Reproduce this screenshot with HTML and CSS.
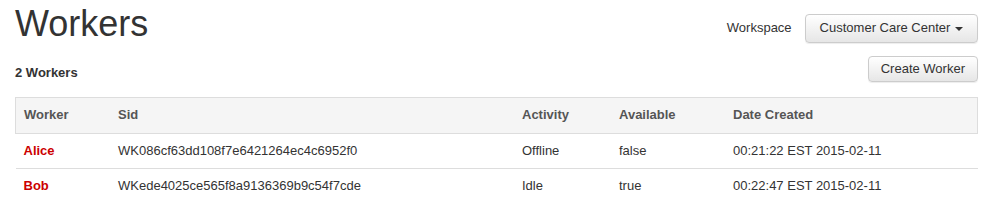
FILE: index.html
```html
<!DOCTYPE html>
<html lang="en">
<head>
    <meta charset="UTF-8">
    <title>Workers</title>
    <link rel="stylesheet" href="styles.css">
</head>
<body>
    <div class="container">
        <div class="page-header">
            <h1>Workers</h1>
            <div class="workspace">
                <span class="workspace-label">Workspace</span>
                <button class="btn btn-lg">Customer Care Center <span class="caret"></span></button>
            </div>
        </div>

        <div class="toolbar">
            <strong class="count">2 Workers</strong>
            <button class="btn">Create Worker</button>
        </div>

        <table class="workers">
            <thead>
                <tr>
                    <th class="col-name">Worker</th>
                    <th class="col-sid">Sid</th>
                    <th class="col-activity">Activity</th>
                    <th class="col-available">Available</th>
                    <th>Date Created</th>
                </tr>
            </thead>
            <tbody>
                <tr>
                    <td><a href="#" class="worker-link">Alice</a></td>
                    <td>WK086cf63dd108f7e6421264ec4c6952f0</td>
                    <td>Offline</td>
                    <td>false</td>
                    <td>00:21:22 EST 2015-02-11</td>
                </tr>
                <tr>
                    <td><a href="#" class="worker-link">Bob</a></td>
                    <td>WKede4025ce565f8a9136369b9c54f7cde</td>
                    <td>Idle</td>
                    <td>true</td>
                    <td>00:22:47 EST 2015-02-11</td>
                </tr>
            </tbody>
        </table>
    </div>
</body>
</html>
```

FILE: styles.css
```css
body {
    font-family: "Liberation Sans", Arial, sans-serif;
    font-size: 13px;
    line-height: 1.42857;
    color: #333;
    margin: 0;
    background: #fff;
}
.container {
    padding: 0 16px 0 15px;
}
.page-header {
    display: flex;
    justify-content: space-between;
    align-items: flex-start;
}
h1 {
    font-size: 36px;
    font-weight: 300;
    line-height: 1.1;
    margin: 4px 0 0;
    color: #333;
}
.workspace {
    display: flex;
    align-items: center;
    margin-top: 14px;
}
.workspace-label {
    margin-right: 13px;
}
.btn {
    font-family: inherit;
    font-size: 13px;
    line-height: 1.42857;
    color: #333;
    padding: 3px 12px;
    border: 1px solid #ccc;
    border-radius: 4px;
    background: linear-gradient(to bottom, #fff 0%, #e6e6e6 100%);
    box-shadow: inset 0 1px 0 rgba(255,255,255,0.15), 0 1px 1px rgba(0,0,0,0.075);
    cursor: pointer;
}
.btn-lg {
    padding: 4px 14px;
}
.caret {
    display: inline-block;
    width: 0;
    height: 0;
    margin-left: 1px;
    vertical-align: middle;
    border-top: 4px solid #333;
    border-left: 4px solid transparent;
    border-right: 4px solid transparent;
}
.toolbar {
    display: flex;
    justify-content: space-between;
    align-items: center;
    margin-top: 12px;
    margin-bottom: 15px;
}
.count {
    font-weight: bold;
    margin-top: 8px;
}
table.workers {
    width: 100%;
    border-collapse: collapse;
}
.workers th,
.workers td {
    text-align: left;
    padding: 8px;
    border-top: 1px solid #ddd;
}
.workers th {
    color: #555;
    font-weight: bold;
    background: #f5f5f5;
    border-bottom: 1px solid #ddd;
}
.workers thead tr {
    border-left: 1px solid #ddd;
    border-right: 1px solid #ddd;
}
.col-name { width: 78px; }
.col-sid { width: 388px; }
.col-activity { width: 81px; }
.col-available { width: 98px; }
.worker-link {
    color: #c00;
    font-weight: bold;
    text-decoration: none;
}
```
